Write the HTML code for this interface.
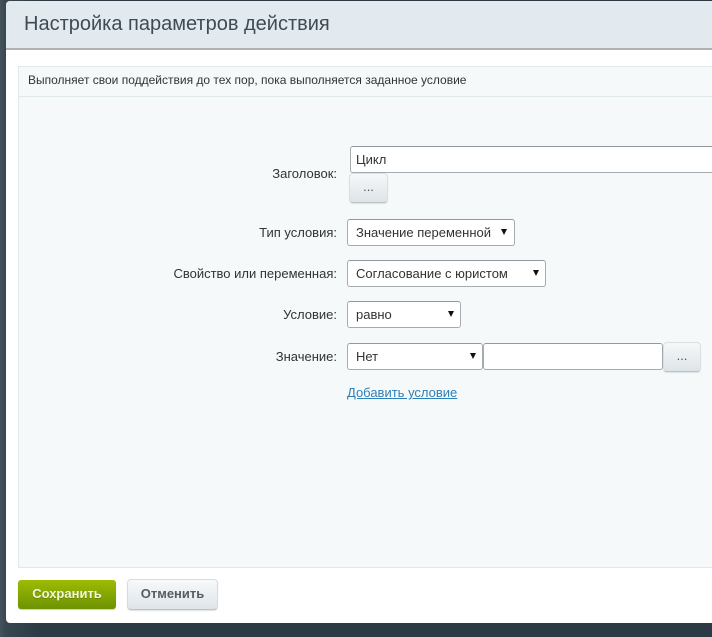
<!DOCTYPE html>
<html lang="ru">
<head>
<meta charset="utf-8">
<style>
html,body{margin:0;padding:0;width:712px;height:637px;overflow:hidden;background:#2b3a44;font-family:"Liberation Sans",Arial,sans-serif;color:#333}
.a{position:absolute;box-sizing:border-box;white-space:nowrap}
#bg{left:0;top:0;width:712px;height:637px;background:linear-gradient(90deg,#44525c 0,#38464f 6px,#2b3a44 40px)}
#dlg{left:6px;top:1px;width:720px;height:622px;background:#fff;border-radius:4px 0 0 4px}
#head{left:6px;top:1px;width:720px;height:49px;background:#e2e9ef;border-bottom:2px solid #b0b3b5;border-radius:4px 0 0 0}
#title{left:24px;top:12px;font-size:20px;line-height:24px;color:#3f4b54}
#panel{left:18px;top:66px;width:700px;height:502px;background:#f5f9f9;border:1px solid #dfe9e9}
#descline{left:19px;top:96px;width:700px;height:1px;background:#e0e9e9}
#desc{left:28px;top:73px;font-size:12px;line-height:15px;color:#333}
.l{right:375px;font-size:13px;line-height:15px;color:#333}
.box{background:#fff;border:1px solid #a5acb0;border-top-color:#92999d;border-radius:3px;font-size:13px;line-height:15px;color:#333;padding:5px 0 0 8px}
.arr{position:absolute;width:0;height:0;border-left:3.5px solid transparent;border-right:3.5px solid transparent;border-top:6px solid #111;top:9px}
.dots{background:linear-gradient(#f6f8f9,#dde4e8);border:1px solid #dcdfe1;border-bottom-color:#bcc3c7;border-radius:4px;box-shadow:0 1px 1px rgba(0,0,0,.1);font-size:13px;line-height:26px;text-align:center;color:#555}
#link{left:347px;top:385px;font-size:13px;line-height:15px;color:#2e7eb8;text-decoration:underline}
#save{left:18px;top:580px;width:98px;height:29px;border-radius:3px;background:linear-gradient(#9dbc05,#6d9200);box-shadow:0 1px 1px rgba(0,0,0,.2);font:bold 13px/27px "Liberation Sans",sans-serif;text-align:center;color:#f3f7d8;text-shadow:0 1px 0 rgba(80,100,0,.5)}
#cancel{left:127px;top:579px;width:91px;height:31px;border-radius:4px;background:linear-gradient(#f7f9fa,#dee5e9);border:1px solid #d8dcde;border-bottom-color:#bcc3c7;box-shadow:0 1px 1px rgba(0,0,0,.12);font:bold 13px/27px "Liberation Sans",sans-serif;text-align:center;color:#555c64}
</style>
</head>
<body>
<div class="a" id="bg"></div>
<div class="a" id="dlg"></div>
<div class="a" id="head"></div>
<div class="a" id="title">Настройка параметров действия</div>
<div class="a" id="panel"></div>
<div class="a" id="descline"></div>
<div class="a" id="desc">Выполняет свои поддействия до тех пор, пока выполняется заданное условие</div>

<div class="a l" style="top:166px">Заголовок:</div>
<div class="a box" style="left:350px;top:146px;width:380px;height:27px;padding-left:5px">Цикл</div>
<div class="a dots" style="left:349px;top:173px;width:39px;height:30px">...</div>

<div class="a l" style="top:225px">Тип условия:</div>
<div class="a box" style="left:347px;top:219px;width:168px;height:27px">Значение переменной<span class="arr" style="left:153px"></span></div>

<div class="a l" style="top:266px">Свойство или переменная:</div>
<div class="a box" style="left:347px;top:260px;width:199px;height:27px">Согласование с юристом<span class="arr" style="left:185px"></span></div>

<div class="a l" style="top:307px">Условие:</div>
<div class="a box" style="left:347px;top:301px;width:114px;height:27px">равно<span class="arr" style="left:100px"></span></div>

<div class="a l" style="top:349px">Значение:</div>
<div class="a box" style="left:347px;top:343px;width:136px;height:27px">Нет<span class="arr" style="left:122px"></span></div>
<div class="a box" style="left:483px;top:343px;width:180px;height:27px"></div>
<div class="a dots" style="left:663px;top:342px;width:38px;height:30px">...</div>

<div class="a" id="link">Добавить условие</div>
<div class="a" id="save">Сохранить</div>
<div class="a" id="cancel">Отменить</div>
</body>
</html>
